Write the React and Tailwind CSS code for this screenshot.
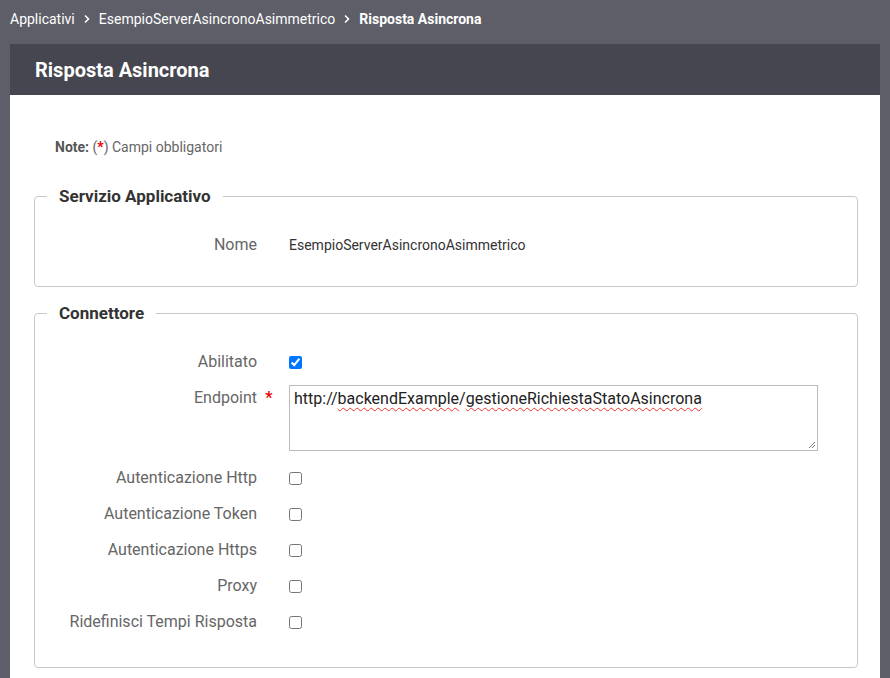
import React from 'react';

const font = { fontFamily: 'Roboto, "Liberation Sans", sans-serif' };

function Chevron() {
  return (
    <svg width="8" height="10" viewBox="0 0 8 10" className="mx-2">
      <path d="M2 1.5 L5.5 5 L2 8.5" fill="none" stroke="#fff" strokeWidth="1.6" />
    </svg>
  );
}

function Row({ label, required, children, tall }) {
  return (
    <div className={tall ? 'flex items-start pt-[5px] pb-[9px]' : 'flex items-center h-9'}>
      <div className={'w-[246px] flex justify-end shrink-0 ' + (tall ? 'pt-[1px]' : '')}>
        <span className="text-[16px] text-[#666]">{label}</span>
        <span className="w-6 text-center text-[#e00] text-[16px] font-bold leading-[24px]">
          {required ? '*' : ''}
        </span>
      </div>
      <div className="ml-[8px] flex items-center">{children}</div>
    </div>
  );
}

function Check({ checked }) {
  return (
    <input
      type="checkbox"
      defaultChecked={checked}
      className="w-[13px] h-[13px] m-0 accent-[#0075ff]"
    />
  );
}

function Box({ title, children, className }) {
  return (
    <fieldset className={'border border-[#c8c8c8] rounded-[4px] p-0 m-0 ' + (className || '')}>
      <legend className="ml-3 px-3 text-[17px] font-bold text-[#333] leading-5">{title}</legend>
      {children}
    </fieldset>
  );
}

export default function App() {
  return (
    <div className="min-h-screen bg-[#5d5e67] pb-4" style={font}>
      {/* breadcrumb */}
      <div className="h-[38px] flex items-center px-[10px] text-[14px] text-white">
        <span>Applicativi</span>
        <Chevron />
        <span>EsempioServerAsincronoAsimmetrico</span>
        <Chevron />
        <span className="font-bold">Risposta Asincrona</span>
      </div>

      <div className="mx-[10px] mt-[6px]">
        <div className="h-[51px] bg-[#45464f] flex items-center px-[25px]">
          <h1 className="text-[20px] font-bold text-white pt-[1px]">Risposta Asincrona</h1>
        </div>

        <div className="bg-white pl-6 pr-[22px] pt-[42px] pb-10">
          <p className="ml-[21px] text-[14px] text-[#666]">
            <span className="font-bold text-[#555]">Note:</span> (<span className="text-[#e00] font-bold">*</span>) Campi obbligatori
          </p>

          <Box title="Servizio Applicativo" className="mt-[28px]">
            <div className="pt-[21px] pb-[23px]">
              <Row label="Nome">
                <span className="text-[14px] text-[#333]">EsempioServerAsincronoAsimmetrico</span>
              </Row>
            </div>
          </Box>

          <Box title="Connettore" className="mt-[16px]">
            <div className="pt-[21px] pb-[27px]">
              <Row label="Abilitato">
                <Check checked />
              </Row>
              <Row label="Endpoint" required tall>
                <div className="relative w-[529px] h-[66px] border border-[#bbb] px-[4px] pt-[1px] text-[16px] text-[#222]">
                  <span>http://</span>
                  <span className="underline decoration-wavy decoration-[#e33] decoration-1 underline-offset-[3px]">backendExample</span>
                  <span>/</span>
                  <span className="underline decoration-wavy decoration-[#e33] decoration-1 underline-offset-[3px]">gestioneRichiestaStatoAsincrona</span>
                  <svg width="8" height="8" viewBox="0 0 8 8" className="absolute right-[1px] bottom-[1px]">
                    <path d="M7 1 L1 7 M7 4 L4 7" stroke="#777" strokeWidth="1" />
                  </svg>
                </div>
              </Row>
              <Row label="Autenticazione Http"><Check /></Row>
              <Row label="Autenticazione Token"><Check /></Row>
              <Row label="Autenticazione Https"><Check /></Row>
              <Row label="Proxy"><Check /></Row>
              <Row label="Ridefinisci Tempi Risposta"><Check /></Row>
            </div>
          </Box>
        </div>
      </div>
    </div>
  );
}
